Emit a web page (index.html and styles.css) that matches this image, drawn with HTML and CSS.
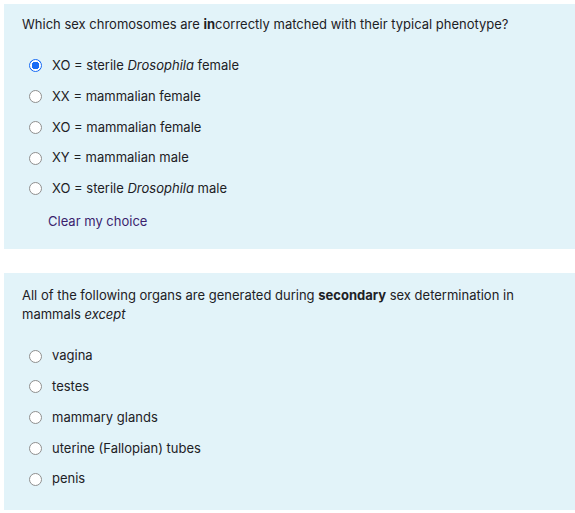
FILE: index.html
```html
<!DOCTYPE html>
<html>
<head>
<meta charset="utf-8">
<link rel="stylesheet" href="styles.css">
</head>
<body>
<div class="page">
  <section class="que que-first">
    <div class="qtext">Which sex chromosomes are <b>in</b>correctly matched with their typical phenotype?</div>
    <div class="answers">
      <label class="opt"><span class="radio checked"></span><span>XO = sterile <i>Drosophila</i> female</span></label>
      <label class="opt"><span class="radio"></span><span>XX = mammalian female</span></label>
      <label class="opt"><span class="radio"></span><span>XO = mammalian female</span></label>
      <label class="opt"><span class="radio"></span><span>XY = mammalian male</span></label>
      <label class="opt"><span class="radio"></span><span>XO = sterile <i>Drosophila</i> male</span></label>
    </div>
    <a class="clear" href="#">Clear my choice</a>
  </section>
  <section class="que que-second">
    <div class="qtext">All of the following organs are generated during <b>secondary</b> sex determination in mammals <i>except</i></div>
    <div class="answers">
      <label class="opt"><span class="radio"></span><span>vagina</span></label>
      <label class="opt"><span class="radio"></span><span>testes</span></label>
      <label class="opt"><span class="radio"></span><span>mammary glands</span></label>
      <label class="opt"><span class="radio"></span><span>uterine (Fallopian) tubes</span></label>
      <label class="opt"><span class="radio"></span><span>penis</span></label>
    </div>
  </section>
</div>
</body>
</html>
```
FILE: styles.css
```css
html, body {
  margin: 0;
  padding: 0;
  background: #ffffff;
}
body {
  font-family: Inter, "Liberation Sans", Arial, sans-serif;
  font-size: 13px;
  line-height: 19.5px;
  color: #1d2125;
}
.page {
  padding: 4px 0 0 4px;
  display: flex;
  flex-direction: column;
  gap: 24px;
}
.que {
  background: #e2f3f9;
  padding: 11px 18px 17px 18px;
  display: flex;
  flex-direction: column;
}
.que-second {
  padding-top: 13px;
  padding-bottom: 15px;
}
.qtext b { font-weight: 700; }
.answers {
  margin-top: 16px;
  display: flex;
  flex-direction: column;
  padding-left: 7px;
}
.opt {
  height: 30.75px;
  display: flex;
  align-items: center;
  gap: 10px;
}
.radio {
  width: 11px;
  height: 11px;
  border: 1px solid #8f8f8f;
  border-radius: 50%;
  background: #fff;
  box-sizing: content-box;
  flex: none;
}
.radio.checked {
  border: 1px solid #1a6cf5;
  background: radial-gradient(circle, #1a6cf5 0 3.6px, #ffffff 4px 5.5px, #1a6cf5 5.6px);
}
.clear {
  margin-top: 8px;
  margin-left: 26px;
  color: #3b1f6e;
  text-decoration: none;
  align-self: flex-start;
}
```
